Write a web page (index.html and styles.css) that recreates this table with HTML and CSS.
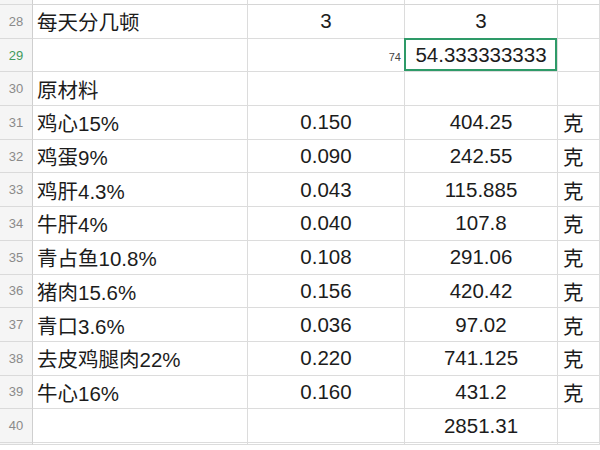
FILE: index.html
```html
<!DOCTYPE html>
<html>
<head>
<meta charset="utf-8">
<link rel="stylesheet" href="styles.css">
</head>
<body>
<div class="sheet">
  <div class="c hd top"></div><div class="c top"></div><div class="c top"></div><div class="c top"></div><div class="c top"></div>

  <div class="c hd">28</div><div class="c a">每天分几顿</div><div class="c n">3</div><div class="c n">3</div><div class="c d"></div>
  <div class="c hd sel">29</div><div class="c a"></div><div class="c b29"><span class="tag">74</span></div><div class="c n active">54.333333333</div><div class="c d"></div>
  <div class="c hd">30</div><div class="c a">原材料</div><div class="c n"></div><div class="c n"></div><div class="c d"></div>
  <div class="c hd">31</div><div class="c a">鸡心15%</div><div class="c n">0.150</div><div class="c n">404.25</div><div class="c d">克</div>
  <div class="c hd">32</div><div class="c a">鸡蛋9%</div><div class="c n">0.090</div><div class="c n">242.55</div><div class="c d">克</div>
  <div class="c hd">33</div><div class="c a">鸡肝4.3%</div><div class="c n">0.043</div><div class="c n">115.885</div><div class="c d">克</div>
  <div class="c hd">34</div><div class="c a">牛肝4%</div><div class="c n">0.040</div><div class="c n">107.8</div><div class="c d">克</div>
  <div class="c hd">35</div><div class="c a">青占鱼10.8%</div><div class="c n">0.108</div><div class="c n">291.06</div><div class="c d">克</div>
  <div class="c hd">36</div><div class="c a">猪肉15.6%</div><div class="c n">0.156</div><div class="c n">420.42</div><div class="c d">克</div>
  <div class="c hd">37</div><div class="c a">青口3.6%</div><div class="c n">0.036</div><div class="c n">97.02</div><div class="c d">克</div>
  <div class="c hd">38</div><div class="c a">去皮鸡腿肉22%</div><div class="c n">0.220</div><div class="c n">741.125</div><div class="c d">克</div>
  <div class="c hd">39</div><div class="c a">牛心16%</div><div class="c n">0.160</div><div class="c n">431.2</div><div class="c d">克</div>
  <div class="c hd">40</div><div class="c a"></div><div class="c n"></div><div class="c n">2851.31</div><div class="c d"></div>
  <div class="c hd"></div><div class="c"></div><div class="c"></div><div class="c"></div><div class="c"></div>
</div>
</body>
</html>
```

FILE: styles.css
```css
html, body {
  margin: 0;
  padding: 0;
  background: #ffffff;
  width: 600px;
  height: 450px;
  overflow: hidden;
}
.sheet {
  display: grid;
  grid-template-columns: 33px 215px 157px 153px 42px;
  grid-template-rows: 5px repeat(13, 33.7px) 2px;
  font-family: "Liberation Sans", "Noto Sans CJK SC", sans-serif;
  font-size: 20.5px;
  color: #1c1c1c;
  width: 600px;
  height: 450px;
  overflow: hidden;
}
.c {
  box-sizing: border-box;
  border-right: 1px solid #dcdcdc;
  border-bottom: 1px solid #dcdcdc;
  display: flex;
  align-items: center;
  white-space: nowrap;
  position: relative;
}
.top {
  border-bottom-color: #d6d6d6;
}
.hd {
  background: #f5f5f5;
  color: #8a8a8a;
  font-size: 13px;
  justify-content: center;
  border-right: 1px solid #cfcfcf;
  border-bottom: 1px solid #dadada;
}
.hd.sel {
  color: #3f9a5c;
}
.a {
  padding-left: 4px;
}
.n {
  justify-content: center;
}
.d {
  padding-left: 5px;
}
.b29 {
  justify-content: flex-end;
  padding-right: 3px;
}
.tag {
  font-size: 11px;
  color: #444;
  margin-top: 3px;
}
.active::after {
  content: "";
  position: absolute;
  left: -1px;
  top: -1px;
  right: 0;
  bottom: 0;
  border: 2px solid #2e9a68;
}
```
